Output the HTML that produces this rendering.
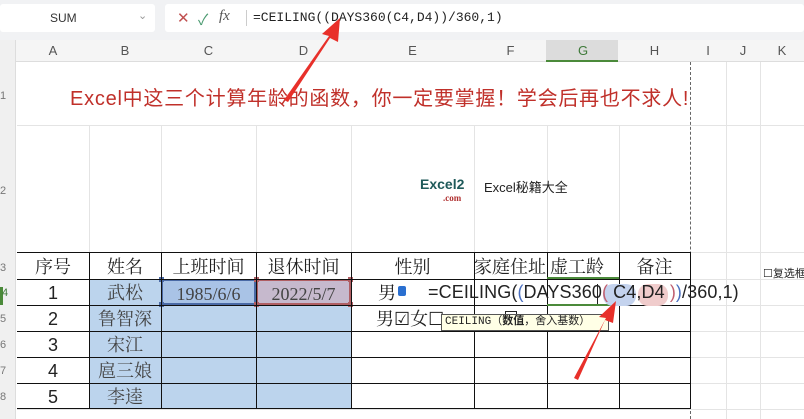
<!DOCTYPE html>
<html><head><meta charset="utf-8">
<style>
*{margin:0;padding:0;box-sizing:border-box}
body{width:804px;height:419px;overflow:hidden;background:#fff;font-family:"Liberation Sans","Noto Sans CJK SC",sans-serif;position:relative}
.a{position:absolute}
.vl{position:absolute;width:1px;background:#e4e4e4}
.hlin{position:absolute;height:1px;background:#e4e4e4}
.bk{position:absolute;background:#111}
.ch{position:absolute;top:40px;height:22px;line-height:22px;text-align:center;font-size:13px;color:#555}
.t{position:absolute;text-align:center;font-size:18px;color:#222;font-family:"Liberation Sans","Noto Serif CJK SC",serif;line-height:26px}
</style></head><body>
<div class="a" style="left:0;top:0;width:804px;height:40px;background:#f1f2f4"></div>
<div class="a" style="left:0;top:4px;width:155px;height:28px;background:#fff;border-radius:3px"></div>
<div class="a" style="left:50px;top:11px;font-size:12px;color:#333">SUM</div>
<div class="a" style="left:138px;top:9px;font-size:11px;color:#999">⌄</div>
<div class="a" style="left:165px;top:4px;width:639px;height:28px;background:#fff;border-radius:3px"></div>
<div class="a" style="left:177px;top:9px;font-size:15px;color:#c05050">✕</div>
<div class="a" style="left:198px;top:9px;font-size:15px;color:#4a9a70">✓</div>
<div class="a" style="left:219px;top:8px;font-size:15px;color:#555;font-style:italic;font-family:'Liberation Serif',serif">fx</div>
<div class="a" style="left:246px;top:10px;width:1px;height:16px;background:#ccc"></div>
<div class="a" style="left:253px;top:10px;font-size:13px;color:#222;font-family:'Liberation Mono',monospace">=CEILING((DAYS360(C4,D4))/360,1)</div>
<div class="a" style="left:0;top:40px;width:804px;height:22px;background:#f5f5f5;border-bottom:1px solid #ddd"></div>
<div class="a" style="left:0;top:40px;width:16px;height:379px;background:#f0f0f0;border-right:1px solid #ddd"></div>
<div class="a" style="left:546px;top:40px;width:72px;height:22px;background:#dcdcdc;border-bottom:2px solid #4b8a3a"></div>
<div class="ch" style="left:17px;width:72px">A</div>
<div class="ch" style="left:89px;width:72px">B</div>
<div class="ch" style="left:161px;width:95px">C</div>
<div class="ch" style="left:256px;width:95px">D</div>
<div class="ch" style="left:351px;width:123px">E</div>
<div class="ch" style="left:474px;width:73px">F</div>
<div class="ch" style="left:547px;width:72px;color:#3f7a3a">G</div>
<div class="ch" style="left:619px;width:71px">H</div>
<div class="ch" style="left:690px;width:36px">I</div>
<div class="ch" style="left:726px;width:34px">J</div>
<div class="ch" style="left:760px;width:44px">K</div>
<div class="a" style="left:0;top:262px;font-size:11px;color:#777">3</div>
<div class="a" style="left:0;top:287px;width:3px;height:18px;background:#4b8a3a"></div>
<div class="a" style="left:2px;top:287px;font-size:11px;color:#3f7a3a">4</div>
<div class="a" style="left:0;top:313px;font-size:11px;color:#777">5</div>
<div class="a" style="left:0;top:339px;font-size:11px;color:#777">6</div>
<div class="a" style="left:0;top:365px;font-size:11px;color:#777">7</div>
<div class="a" style="left:0;top:391px;font-size:11px;color:#777">8</div>
<div class="a" style="left:0;top:185px;font-size:11px;color:#777">2</div>
<div class="a" style="left:0;top:90px;font-size:11px;color:#777">1</div>
<div class="vl" style="left:89px;top:125px;height:127px"></div>
<div class="vl" style="left:161px;top:125px;height:127px"></div>
<div class="vl" style="left:256px;top:125px;height:127px"></div>
<div class="vl" style="left:351px;top:125px;height:127px"></div>
<div class="vl" style="left:474px;top:125px;height:127px"></div>
<div class="vl" style="left:547px;top:125px;height:127px"></div>
<div class="vl" style="left:619px;top:125px;height:127px"></div>
<div class="vl" style="left:726px;top:62px;height:357px"></div>
<div class="vl" style="left:760px;top:62px;height:357px"></div>
<div class="hlin" style="left:17px;top:125px;width:787px"></div>
<div class="hlin" style="left:690px;top:252px;width:114px"></div>
<div class="hlin" style="left:690px;top:279px;width:114px"></div>
<div class="hlin" style="left:690px;top:305px;width:114px"></div>
<div class="hlin" style="left:690px;top:331px;width:114px"></div>
<div class="hlin" style="left:690px;top:357px;width:114px"></div>
<div class="hlin" style="left:690px;top:383px;width:114px"></div>
<div class="hlin" style="left:17px;top:409px;width:787px"></div>
<div class="a" style="left:690px;top:62px;height:357px;border-left:1px dashed #666"></div>
<div class="a" style="left:70px;top:82px;font-size:20px;letter-spacing:0.75px;color:#c0302a;font-family:'Liberation Sans','Noto Sans CJK SC',sans-serif;white-space:nowrap">Excel中这三个计算年龄的函数，你一定要掌握！学会后再也不求人!</div>
<div class="a" style="left:420px;top:176px;font-size:14px;font-weight:bold;color:#1f5a5a">Excel2</div>
<div class="a" style="left:443px;top:193px;font-size:9px;font-weight:bold;color:#b03030;font-family:'Liberation Serif',serif">.com</div>
<div class="a" style="left:484px;top:177px;font-size:13px;color:#222;font-family:'Liberation Sans','Noto Sans CJK SC',sans-serif">Excel秘籍大全</div>
<div class="a" style="left:89px;top:279px;width:72px;height:130px;background:#bcd4ed"></div>
<div class="a" style="left:161px;top:305px;width:190px;height:104px;background:#bcd4ed"></div>
<div class="a" style="left:161px;top:279px;width:95px;height:26px;background:#a9c3e6;border:2px solid #4a6aa6"></div>
<div class="a" style="left:256px;top:279px;width:95px;height:26px;background:#c6b9cd;border:2px solid #b05e63"></div>
<div class="a" style="left:159px;top:277px;width:5px;height:5px;background:#4a6aa6"></div>
<div class="a" style="left:159px;top:302px;width:5px;height:5px;background:#4a6aa6"></div>
<div class="a" style="left:254px;top:277px;width:5px;height:5px;background:#b05e63"></div>
<div class="a" style="left:348px;top:277px;width:5px;height:5px;background:#b05e63"></div>
<div class="a" style="left:254px;top:302px;width:5px;height:5px;background:#b05e63"></div>
<div class="a" style="left:348px;top:302px;width:5px;height:5px;background:#b05e63"></div>
<div class="bk" style="left:17px;top:252px;width:673px;height:1px"></div>
<div class="bk" style="left:17px;top:279px;width:673px;height:1px"></div>
<div class="bk" style="left:17px;top:305px;width:673px;height:1px"></div>
<div class="bk" style="left:17px;top:331px;width:673px;height:1px"></div>
<div class="bk" style="left:17px;top:357px;width:673px;height:1px"></div>
<div class="bk" style="left:17px;top:383px;width:673px;height:1px"></div>
<div class="bk" style="left:17px;top:408px;width:673px;height:1px"></div>
<div class="bk" style="left:89px;top:252px;width:1px;height:157px"></div>
<div class="bk" style="left:161px;top:252px;width:1px;height:157px"></div>
<div class="bk" style="left:256px;top:252px;width:1px;height:157px"></div>
<div class="bk" style="left:351px;top:252px;width:1px;height:157px"></div>
<div class="bk" style="left:474px;top:252px;width:1px;height:157px"></div>
<div class="bk" style="left:547px;top:252px;width:1px;height:157px"></div>
<div class="bk" style="left:619px;top:252px;width:1px;height:157px"></div>
<div class="bk" style="left:690px;top:252px;width:1px;height:157px"></div>
<div class="a" style="left:547px;top:277px;width:72px;height:2px;background:#4b8a3a"></div>
<div class="a" style="left:547px;top:304px;width:72px;height:2px;background:#4b8a3a"></div>
<div class="t" style="left:17px;top:254px;width:72px">序号</div>
<div class="t" style="left:89px;top:254px;width:72px">姓名</div>
<div class="t" style="left:161px;top:254px;width:95px">上班时间</div>
<div class="t" style="left:256px;top:254px;width:95px">退休时间</div>
<div class="t" style="left:351px;top:254px;width:123px">性别</div>
<div class="t" style="left:474px;top:254px;width:73px;white-space:nowrap;overflow:hidden;text-align:left">家庭住址</div>
<div class="t" style="left:547px;top:254px;width:72px;text-align:left;padding-left:3px">虚工龄</div>
<div class="t" style="left:619px;top:254px;width:71px">备注</div>
<div class="t" style="left:17px;top:280px;width:72px">1</div>
<div class="t" style="left:17px;top:306px;width:72px">2</div>
<div class="t" style="left:17px;top:332px;width:72px">3</div>
<div class="t" style="left:17px;top:358px;width:72px">4</div>
<div class="t" style="left:17px;top:384px;width:72px">5</div>
<div class="t" style="left:89px;top:280px;width:72px;color:#444">武松</div>
<div class="t" style="left:89px;top:306px;width:72px;color:#444">鲁智深</div>
<div class="t" style="left:89px;top:332px;width:72px;color:#444">宋江</div>
<div class="t" style="left:89px;top:358px;width:72px;color:#444">扈三娘</div>
<div class="t" style="left:89px;top:384px;width:72px;color:#444">李逵</div>
<div class="t" style="left:161px;top:281px;width:95px;color:#444;font-family:'Liberation Serif',serif">1985/6/6</div>
<div class="t" style="left:256px;top:281px;width:95px;color:#444;font-family:'Liberation Serif',serif">2022/5/7</div>
<div class="t" style="left:378px;top:280px">男</div>
<div class="a" style="left:398px;top:286px;width:8px;height:10px;background:#2a6fd0;border-radius:2px"></div>
<div class="t" style="left:376px;top:306px;white-space:nowrap">男☑女☐</div>
<div class="a" style="left:505px;top:311px;width:12px;height:14px;border:1px solid #222"></div>
<div class="a" style="left:603px;top:284px;width:33px;height:22px;background:#c4d3ee;border-radius:10px"></div>
<div class="a" style="left:638px;top:284px;width:30px;height:22px;background:#f0cccc;border-radius:10px"></div>
<div class="a" style="left:428px;top:282px;font-size:18px;color:#222;white-space:nowrap;letter-spacing:0.1px">=CEILING(<span style="color:#4a6fc0">(</span>DAYS360<span style="color:#c06070">(</span> C4,D4 <span style="color:#c06070">)</span><span style="color:#4a6fc0">)</span>/360,1)</div>
<div class="a" style="left:597px;top:284px;width:1px;height:20px;background:#222"></div>
<div class="a" style="left:441px;top:314px;width:168px;height:17px;background:#ffffe6;border:1px solid #555;font-size:11px;line-height:15px;padding-left:3px;white-space:nowrap;overflow:hidden;font-family:'Liberation Mono','Noto Sans CJK SC',monospace;color:#222">CEILING（<b>数值</b>，舍入基数）</div>
<div class="a" style="left:763px;top:265px;font-size:11px;color:#222;white-space:nowrap">☐复选框</div>
<svg class="a" style="left:0;top:0" width="804" height="419">
<polygon points="284,100 288,102 330,38 338,42 340,18 322,34 329,36" fill="#e8302a"/>
<polygon points="574,378 578,380 605,320 613,323 616,301 599,317 606,318" fill="#e8302a"/>
</svg>
</body></html>
